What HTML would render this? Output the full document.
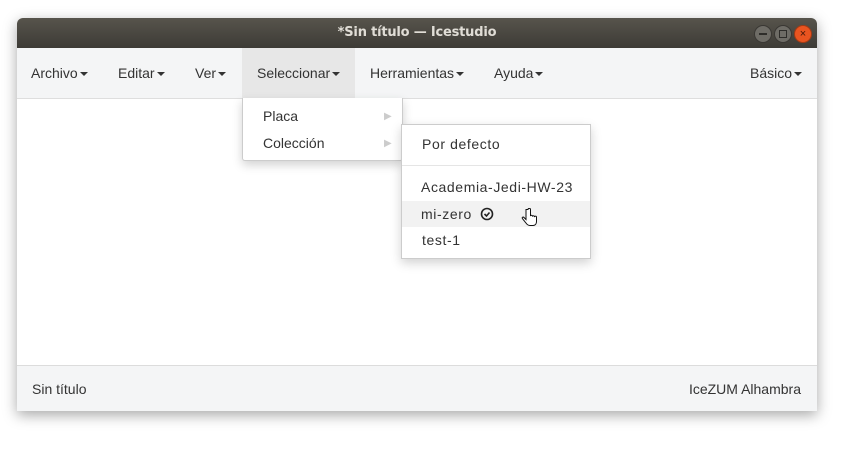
<!DOCTYPE html>
<html><head><style>
body{margin:0;width:841px;height:450px;background:#fff;position:relative;overflow:hidden;font-family:"Liberation Sans",sans-serif;}
.win{position:absolute;left:17px;top:18px;width:800px;height:393px;background:#fff;box-shadow:0 4px 14px rgba(0,0,0,.35);border-radius:6px 6px 0 0;overflow:hidden}
.title{height:30px;background:linear-gradient(#57544c,#3d3b36);color:#e0ddd6;font-weight:bold;font-size:13px;text-align:center;line-height:30px;font-family:"DejaVu Sans","Liberation Sans",sans-serif;letter-spacing:-0.2px}
.menu{position:absolute;top:30px;left:0;right:0;height:50px;background:#f4f5f6;border-bottom:1px solid #dedede;font-size:14px;color:#333}
.menu span{position:absolute;top:0;line-height:50px}
.car{display:inline-block;width:0;height:0;border-left:4px solid transparent;border-right:4px solid transparent;border-top:4px solid #333;vertical-align:middle;margin-left:2px}
.foot{position:absolute;top:347px;left:0;right:0;height:46px;background:#f4f5f6;border-top:1px solid #dcdcdc;font-size:14px;color:#333;line-height:46px}
.btn{position:absolute;top:7px;width:16px;height:16px;border-radius:50%;background:#6e6c66;border:1px solid #3a3834}
.dd{position:absolute;background:#fff;border:1px solid #ccc;box-shadow:0 4px 10px rgba(0,0,0,.18);font-size:14px;color:#333}
.dd div{position:absolute;left:0;right:0}
.sub div{letter-spacing:0.6px}
</style></head><body>
<div class="win">
<div class="title">*Sin título — Icestudio</div>
<div class="btn" style="left:737px"><div style="position:absolute;left:4px;top:7px;width:8px;height:2px;background:#2e2d2a"></div></div>
<div class="btn" style="left:757px"><div style="position:absolute;left:4px;top:4px;width:6px;height:6px;border:1px solid #2e2d2a"></div></div>
<div class="btn" style="left:777px;background:#e95420;border-color:#a33a14;color:#40170a;font-size:11px;line-height:16px;text-align:center">×</div>
<div class="menu">
<span style="left:14px">Archivo<i class="car"></i></span>
<span style="left:101px">Editar<i class="car"></i></span>
<span style="left:178px">Ver<i class="car"></i></span>
<span style="left:225px;width:113px;background:#e7e7e7;height:50px;padding-left:15px;box-sizing:border-box">Seleccionar<i class="car"></i></span>
<span style="left:353px">Herramientas<i class="car"></i></span>
<span style="left:477px">Ayuda<i class="car"></i></span>
<span style="left:733px">Básico<i class="car"></i></span>
</div>
<div class="foot"><span style="position:absolute;left:15px">Sin título</span><span style="position:absolute;right:16px">IceZUM Alhambra</span></div>
</div>
<div class="dd" style="left:242px;top:98px;width:159px;height:62px;border-top:none;border-radius:0 0 3px 3px">
<div style="top:10px;padding-left:20px">Placa<span style="position:absolute;left:141px;top:3px;color:#ccc;font-size:10px">▶</span></div>
<div style="top:37px;padding-left:20px">Colección<span style="position:absolute;left:141px;top:3px;color:#ccc;font-size:10px">▶</span></div>
</div>
<div class="dd sub" style="left:401px;top:124px;width:188px;height:133px">
<div style="top:11px;padding-left:20px">Por defecto</div>
<div style="top:40px;height:1px;background:#e5e5e5"></div>
<div style="top:54px;padding-left:19px">Academia-Jedi-HW-23</div>
<div style="top:76px;height:26px;background:#f2f2f2"></div>
<div style="top:81px;padding-left:19px">mi-zero<svg style="position:absolute;left:78px;top:1px" width="14" height="14" viewBox="0 0 14 14"><circle cx="7" cy="7" r="5.5" fill="none" stroke="#222" stroke-width="1.6"/><path d="M4.5 7l2 2 3-3.5" fill="none" stroke="#222" stroke-width="1.6"/></svg><svg style="position:absolute;left:119px;top:2px" width="18" height="20" viewBox="0 0 18 20"><path d="M5 1.5v10l-2-2c-1-1-2.5 0-1.5 1.2L5 15c1 1.5 2 2.5 4 2.5h3c2.5 0 3.5-2 3.5-4V9c0-1-1.5-1.2-2 0 0-1.5-1.5-1.5-2-.5 0-1.5-1.5-1.5-2-.5V1.5c0-1.5-2.5-1.5-2.5 0z" fill="#fff" stroke="#111" stroke-width="1"/></svg></div>
<div style="top:107px;padding-left:20px">test-1</div>
</div>
</body></html>
